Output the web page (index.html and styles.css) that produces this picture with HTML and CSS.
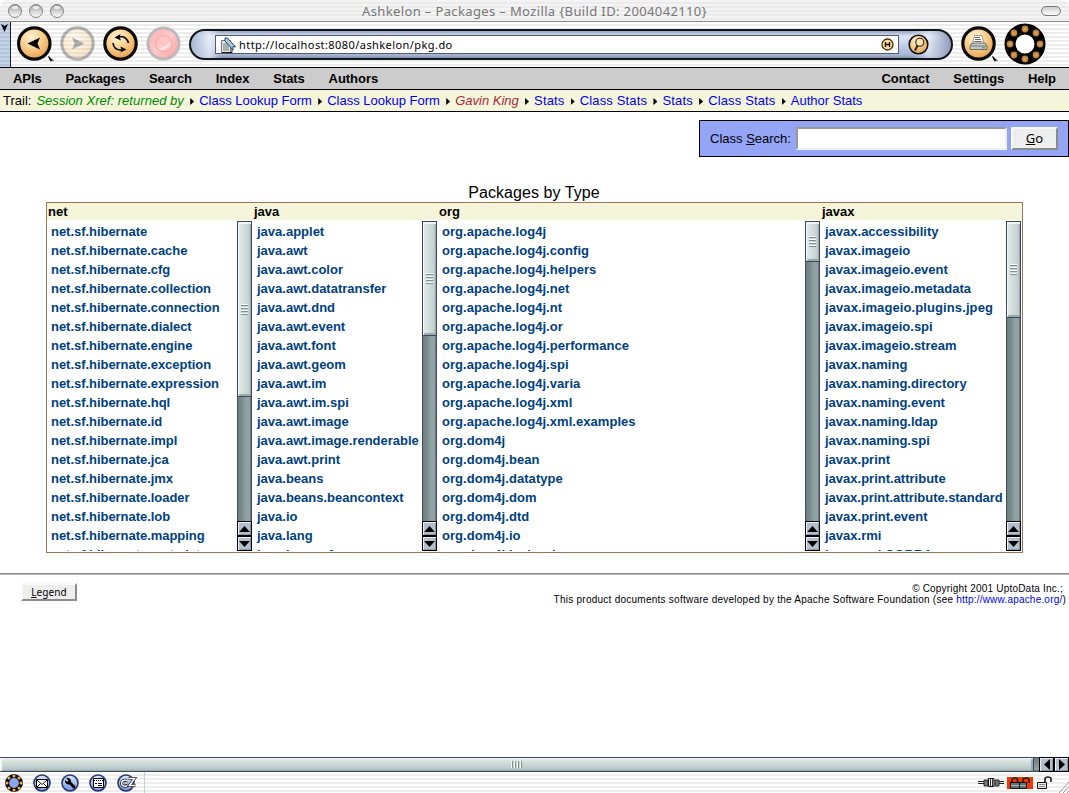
FILE: index.html
```html
<!DOCTYPE html>
<html lang="en">
<head>
<meta charset="utf-8">
<title>Ashkelon – Packages</title>
<link rel="stylesheet" href="styles.css">
</head>
<body>
<svg width="0" height="0" class="defs">
  <defs>
    <radialGradient id="gold" cx=".4" cy=".3" r=".75"><stop offset="0" stop-color="#fff3d6"/><stop offset=".5" stop-color="#f8cd88"/><stop offset="1" stop-color="#e59a4e"/></radialGradient>
    <radialGradient id="bead"><stop offset="0" stop-color="#e0a95f"/><stop offset="1" stop-color="#ad7532"/></radialGradient>
    <linearGradient id="blue" x1="0" y1="0" x2="0" y2="1"><stop offset="0" stop-color="#dfe8ff"/><stop offset="1" stop-color="#7694e6"/></linearGradient>
    <linearGradient id="red" x1="0" y1="0" x2="1" y2="1"><stop offset="0" stop-color="#ffb0b0"/><stop offset=".5" stop-color="#ffc9c9"/><stop offset="1" stop-color="#fb9c9c"/></linearGradient>
    <linearGradient id="light" x1="0" y1="0" x2="0" y2="1"><stop offset="0" stop-color="#8e8e8e"/><stop offset=".5" stop-color="#d2d2d2"/><stop offset="1" stop-color="#fff"/></linearGradient>
    <symbol id="s-up" viewBox="0 0 9 5"><path d="M0 5L4.500 0L9 5z"/></symbol>
    <symbol id="s-down" viewBox="0 0 9 5"><path d="M0 0L4.500 5L9 0z"/></symbol>
    <symbol id="s-ring" viewBox="0 0 42 42">
      <circle cx="21" cy="21" r="15" fill="none" stroke="#000" stroke-width="11"/>
      <g fill="url(#bead)"><circle cx="21" cy="6" r="3.400"/><circle cx="32" cy="10" r="3.400"/><circle cx="36" cy="21" r="3.400"/><circle cx="32" cy="32" r="3.400"/><circle cx="21" cy="36" r="3.400"/><circle cx="10" cy="32" r="3.400"/><circle cx="6" cy="21" r="3.400"/><circle cx="10" cy="10" r="3.400"/></g>
    </symbol>
  </defs>
</svg>

<header class="titlebar">
  <svg class="lights" width="58" height="16" viewBox="0 0 58 16">
    <g fill="url(#light)" stroke="#858585"><circle cx="8" cy="8" r="6.500"/><circle cx="29" cy="8" r="6.500"/><circle cx="50" cy="8" r="6.500"/></g>
    <g fill="#fff" opacity=".75"><ellipse cx="8" cy="4.500" rx="3.300" ry="1.700"/><ellipse cx="29" cy="4.500" rx="3.300" ry="1.700"/><ellipse cx="50" cy="4.500" rx="3.300" ry="1.700"/></g>
  </svg>
  <h1 class="window-title">Ashkelon – Packages – Mozilla {Build ID: 2004042110}</h1>
  <span class="pill"></span>
</header>

<div class="toolbar">
  <div class="grippy"><svg width="7" height="8" viewBox="0 0 7 8"><path d="M0 0L3.500 2L7 0L3.500 8z"/></svg></div>
  <svg class="tool back" width="40" height="42" viewBox="0 0 40 42">
    <circle cx="18.300" cy="19.500" r="15.700" fill="url(#gold)" stroke="#0b0b0b" stroke-width="3.200"/>
    <path d="M11.500 19.500L24 13.500L21.500 19.500L24 25.500z"/><path d="M32 31.500L38 37L35.500 36.500L35 38L32.800 34.500z"/>
  </svg>
  <svg class="tool forward" width="36" height="42" viewBox="0 0 36 42" opacity=".3">
    <circle cx="17.500" cy="19.500" r="15.700" fill="url(#gold)" stroke="#0b0b0b" stroke-width="3"/>
    <path d="M24.500 19.500L12 13.500L14.500 19.500L12 25.500z"/>
  </svg>
  <svg class="tool reload" width="36" height="42" viewBox="0 0 36 42">
    <circle cx="17.500" cy="19.500" r="15.700" fill="url(#gold)" stroke="#0b0b0b" stroke-width="3.200"/>
    <path d="M15 13Q23 11 25.500 19M20 26Q11 27 10 19" fill="none" stroke="#0b0b0b" stroke-width="1.700"/>
    <path d="M11.500 13.500L17.500 10L16.500 13L18 16.500zM23.500 25.500L17.500 22.500L18.500 26L17.500 28.500z"/>
  </svg>
  <svg class="tool stop" width="36" height="42" viewBox="0 0 36 42">
    <circle cx="17.500" cy="19.500" r="15.500" fill="url(#red)" stroke="#bcbaba" stroke-width="3"/>
    <circle cx="17.500" cy="19.500" r="8" fill="#ffc4c4" stroke="#fba0a0" opacity=".8"/><path d="M12 24A8 8 0 0 0 25 17Q19 24 12 24z" fill="#fff" opacity=".55"/>
  </svg>
  <div class="location">
    <div class="url-box">
      <svg width="17" height="16" viewBox="0 0 17 16"><path d="M1.500 3.500h9v12h-9z" fill="#e6e6e6" stroke="#777"/><path d="M3 7h5M3 9h6M3 11h6M3 13h6" stroke="#777"/><path d="M2 15.500h10V10" fill="none" stroke="#111"/><path d="M5 1L7.500 1L15.500 10L13 9.500L13 13L5 4z" fill="#a7cbe0" stroke="#29495e"/></svg>
      <span class="url">http://localhost:8080/ashkelon/pkg.do</span>
      <svg class="h-mark" width="13" height="13" viewBox="0 0 13 13"><circle cx="6.500" cy="6.500" r="5.500" fill="#ffd892" stroke="#3d2b0e" stroke-width="1.300"/><path d="M4.500 4v5M8.500 4v5M4.500 6.500h4" stroke="#111" stroke-width="1.400"/></svg>
    </div>
    <svg class="go" width="21" height="21" viewBox="0 0 21 21"><circle cx="10.500" cy="10.500" r="9.300" fill="url(#gold)" stroke="#111" stroke-width="1.600"/><circle cx="11.800" cy="8.200" r="4" fill="#ffe2ae" stroke="#222" stroke-width="1.100"/><path d="M9.500 11.500L7 16.500" stroke="#222" stroke-width="2"/></svg>
  </div>
  <svg class="tool print" width="39" height="42" viewBox="0 0 39 42">
    <circle cx="17.500" cy="19.500" r="15.700" fill="url(#gold)" stroke="#0b0b0b" stroke-width="3.200"/>
    <path d="M13.500 11.500h7.500l2 9H11.500z" fill="#fff" stroke="#777" stroke-width=".7"/><path d="M14 13.500h5M14 15.500h6M13.500 17.500h7" stroke="#555" stroke-width=".9"/>
    <path d="M11 19h13l2 3v3.500H9V22z" fill="#c4c7c8" stroke="#555" stroke-width=".8"/><path d="M9 22h17" stroke="#777"/><path d="M21 23.800h3" stroke="#37b33b" stroke-width="1.200"/>
    <path d="M31 31.500L37 37L34.500 36.500L34 38L31.800 34.500z"/>
  </svg>
  <svg class="throbber" width="42" height="42"><circle cx="21" cy="21" r="11" fill="#fff"/><use href="#s-ring"/></svg>
</div>

<nav class="menu">
  <div class="menu-group"><a>APIs</a><a>Packages</a><a>Search</a><a>Index</a><a>Stats</a><a>Authors</a></div>
  <div class="menu-group"><a>Contact</a><a>Settings</a><a>Help</a></div>
</nav>

<div class="trail">
  <span class="trail-label">Trail:</span><em class="xref">Session Xref: returned by</em><i class="sep"></i><a>Class Lookup Form</a><i class="sep"></i><a>Class Lookup Form</a><i class="sep"></i><em class="author">Gavin King</em><i class="sep"></i><a class="wide">Stats</a><i class="sep"></i><a class="wide">Class Stats</a><i class="sep"></i><a class="wide">Stats</a><i class="sep"></i><a class="wide">Class Stats</a><i class="sep"></i><a>Author Stats</a>
</div>

<main class="page">
  <form class="search"><label for="q">Class <u>S</u>earch:</label><input id="q" class="field" type="text"><button class="btn go-btn" type="button"><u>G</u>o</button></form>
  <h2 class="caption">Packages by Type</h2>
  <section class="packages">
    <div class="col net">
      <h3>net</h3>
      <div class="pane"><ul><li>net.sf.hibernate</li><li>net.sf.hibernate.cache</li><li>net.sf.hibernate.cfg</li><li>net.sf.hibernate.collection</li><li>net.sf.hibernate.connection</li><li>net.sf.hibernate.dialect</li><li>net.sf.hibernate.engine</li><li>net.sf.hibernate.exception</li><li>net.sf.hibernate.expression</li><li>net.sf.hibernate.hql</li><li>net.sf.hibernate.id</li><li>net.sf.hibernate.impl</li><li>net.sf.hibernate.jca</li><li>net.sf.hibernate.jmx</li><li>net.sf.hibernate.loader</li><li>net.sf.hibernate.lob</li><li>net.sf.hibernate.mapping</li><li>net.sf.hibernate.metadata</li></ul>
      <div class="vbar"><div class="thumb t-net"><i class="grip"></i></div><span class="arrow"><svg width="11" height="6"><use href="#s-up"/></svg></span><span class="arrow"><svg width="11" height="6"><use href="#s-down"/></svg></span></div></div>
    </div>
    <div class="col">
      <h3>java</h3>
      <div class="pane"><ul><li>java.applet</li><li>java.awt</li><li>java.awt.color</li><li>java.awt.datatransfer</li><li>java.awt.dnd</li><li>java.awt.event</li><li>java.awt.font</li><li>java.awt.geom</li><li>java.awt.im</li><li>java.awt.im.spi</li><li>java.awt.image</li><li>java.awt.image.renderable</li><li>java.awt.print</li><li>java.beans</li><li>java.beans.beancontext</li><li>java.io</li><li>java.lang</li><li>java.lang.ref</li></ul>
      <div class="vbar"><div class="thumb t-java"><i class="grip"></i></div><span class="arrow"><svg width="11" height="6"><use href="#s-up"/></svg></span><span class="arrow"><svg width="11" height="6"><use href="#s-down"/></svg></span></div></div>
    </div>
    <div class="col org">
      <h3>org</h3>
      <div class="pane"><ul><li>org.apache.log4j</li><li>org.apache.log4j.config</li><li>org.apache.log4j.helpers</li><li>org.apache.log4j.net</li><li>org.apache.log4j.nt</li><li>org.apache.log4j.or</li><li>org.apache.log4j.performance</li><li>org.apache.log4j.spi</li><li>org.apache.log4j.varia</li><li>org.apache.log4j.xml</li><li>org.apache.log4j.xml.examples</li><li>org.dom4j</li><li>org.dom4j.bean</li><li>org.dom4j.datatype</li><li>org.dom4j.dom</li><li>org.dom4j.dtd</li><li>org.dom4j.io</li><li>org.dom4j.jaxb.rule</li></ul>
      <div class="vbar"><div class="thumb t-org"><i class="grip"></i></div><span class="arrow"><svg width="11" height="6"><use href="#s-up"/></svg></span><span class="arrow"><svg width="11" height="6"><use href="#s-down"/></svg></span></div></div>
    </div>
    <div class="col">
      <h3>javax</h3>
      <div class="pane"><ul><li>javax.accessibility</li><li>javax.imageio</li><li>javax.imageio.event</li><li>javax.imageio.metadata</li><li class="loose">javax.imageio.plugins.jpeg</li><li>javax.imageio.spi</li><li>javax.imageio.stream</li><li>javax.naming</li><li>javax.naming.directory</li><li>javax.naming.event</li><li>javax.naming.ldap</li><li>javax.naming.spi</li><li>javax.print</li><li>javax.print.attribute</li><li class="tight">javax.print.attribute.standard</li><li>javax.print.event</li><li>javax.rmi</li><li>javax.rmi.CORBA</li></ul>
      <div class="vbar"><div class="thumb t-javax"><i class="grip"></i></div><span class="arrow"><svg width="11" height="6"><use href="#s-up"/></svg></span><span class="arrow"><svg width="11" height="6"><use href="#s-down"/></svg></span></div></div>
    </div>
  </section>
  <footer class="footer">
    <button class="btn legend" type="button"><u>L</u>egend</button>
    <div class="legal"><div class="copy">© Copyright 2001 UptoData Inc.;</div><div class="notice">This product documents software developed by the Apache Software Foundation (see <a>http://www.apache.org/</a>)</div></div>
  </footer>
</main>

<div class="hbar"><div class="hthumb"><i class="hgrip"></i></div><span class="arrow"><svg width="6" height="11" viewBox="0 0 5 9"><path d="M5 0L0 4.500L5 9z"/></svg></span><span class="arrow"><svg width="6" height="11" viewBox="0 0 5 9"><path d="M0 0L5 4.500L0 9z"/></svg></span></div>

<div class="status">
  <div class="apps">
    <svg width="18" height="18" viewBox="0 0 18 18"><circle cx="9" cy="9" r="6.900" fill="#8aa6ee" stroke="#080808" stroke-width="4"/><g fill="#f0b050"><circle cx="9" cy="2" r="1.500"/><circle cx="14" cy="4" r="1.500"/><circle cx="16" cy="9" r="1.500"/><circle cx="14" cy="14" r="1.500"/><circle cx="9" cy="16" r="1.500"/><circle cx="4" cy="14" r="1.500"/><circle cx="2" cy="9" r="1.500"/><circle cx="4" cy="4" r="1.500"/></g></svg>
    <svg width="18" height="18" viewBox="0 0 18 18"><circle cx="9" cy="9" r="8" fill="url(#blue)" stroke="#26386b" stroke-width="1.600"/><path d="M3.500 5.500h11v8h-11z" fill="#fff" stroke="#000"/><path d="M4 6L9 10.500L14 6M4 13L7.500 9.500M14 13L10.500 9.500" fill="none" stroke="#000" stroke-width=".9"/></svg>
    <svg width="18" height="18" viewBox="0 0 18 18"><circle cx="9" cy="9" r="8" fill="url(#blue)" stroke="#26386b" stroke-width="1.600"/><path d="M8 8L13 13" stroke="#000" stroke-width="3" stroke-linecap="round"/><path d="M5 4L7.500 6.500L6.500 8L4 6A3.500 3.500 0 0 0 9 10L10 7A3.500 3.500 0 0 0 5 4z"/></svg>
    <svg width="18" height="18" viewBox="0 0 18 18"><circle cx="9" cy="9" r="8" fill="url(#blue)" stroke="#26386b" stroke-width="1.600"/><path d="M4.500 4.500h10v9h-10z" fill="#fff" stroke="#000"/><path d="M5 6.500h9" stroke="#000" stroke-dasharray="1 1"/><path d="M6 9.500h2M9 9.500h4M9 11.500h4" stroke="#000"/></svg>
    <svg width="20" height="18" viewBox="0 0 20 18"><circle cx="9" cy="9" r="8" fill="url(#blue)" stroke="#26386b" stroke-width="1.600"/><path d="M10 6.500Q5 5 4.500 9.500Q5 13 10 12M10.500 9H7.500M11.500 4.500H17.500L12.500 11.500H18.500" fill="none" stroke="#222" stroke-width="3"/><path d="M10 6.500Q5 5 4.500 9.500Q5 13 10 12M10.500 9H7.500M11.500 4.500H17.500L12.500 11.500H18.500" fill="none" stroke="#fff" stroke-width="1.500"/></svg>
  </div>
  <div class="security">
    <svg class="plug" width="26" height="9" viewBox="0 0 26 9"><path d="M0 3.500h8M0 5.500h8M18 3.500h8M18 5.500h8" stroke="#222"/><path d="M6 2h4v6H6zM17 2h4v6h-4z" fill="#777" stroke="#222" stroke-width=".9"/><path d="M10.500.5h5.500v8h-5.500z" fill="#eee" stroke="#111"/><path d="M12.500 1v7M14.500 1v7" stroke="#333"/></svg>
    <span class="alert"><svg width="24" height="12" viewBox="0 0 24 12"><path d="M4 6V3Q4 1 7 1Q9.500 1 9.500 3V6M15 6V3Q15 1 18 1Q21 1 21 3V6" fill="none" stroke="#222" stroke-width="1.600"/><path d="M2.500 5.500h9v6h-9zM11.500 5.500h7v6h-7z" fill="#65717a" stroke="#111"/><path d="M3 8.500h8M12 8.500h6" stroke="#a6b0b8"/></svg></span>
    <svg class="unlock" width="17" height="13" viewBox="0 0 17 13"><path d="M8 6V3Q8 1 11 1Q14 1 14 3V6" fill="none" stroke="#222" stroke-width="1.600"/><path d="M.5 6.500h9v6h-9z" fill="#eee" stroke="#111"/><path d="M2 8.500h6M2 10.500h6" stroke="#888"/></svg>
    <svg class="resize" width="10" height="12" viewBox="0 0 10 12"><path d="M0 12L10 1M4 12L10 5.500M8 12L10 10" stroke="#999"/></svg>
  </div>
</div>
</body>
</html>
```
FILE: styles.css
```css
* { box-sizing: border-box; }
body { margin: 0; width: 1069px; height: 793px; overflow: hidden; display: flex; flex-direction: column; background: #fff; color: #000; font: 13px/19px "Liberation Sans", Arial, sans-serif; }
svg { display: block; flex: none; }
.defs { position: absolute; }
h1, h2, h3, ul { margin: 0; padding: 0; font-size: inherit; }
i { display: block; flex: none; }
a { color: #00e; }

.titlebar { flex: none; height: 22px; display: grid; grid-template-columns: 100px 1fr 100px; align-items: center; padding: 0 7px; border: solid #c8c8c8; border-width: 0 0 1px; border-bottom-color: #8a8a8a; border-radius: 7px 7px 0 0; background: repeating-linear-gradient(#f4f4f4 0 2px, #ebebeb 2px 4px); }
.window-title { text-align: center; font: 13px/20px "Noto Sans", sans-serif; letter-spacing: .37px; color: #777; white-space: nowrap; }
.pill { justify-self: end; width: 20px; height: 10px; margin: 1px 1px 0 0; border: 1px solid #777; border-radius: 5px; background: linear-gradient(#ccc, #fff); }

.toolbar { flex: none; height: 46px; display: flex; align-items: center; border-bottom: 1px solid #000; background: repeating-linear-gradient(#fff 0 2px, #ececec 2px 4px); }
.grippy { width: 11px; height: 45px; padding: 2px 0 0 1px; border-right: 1px solid #222; background: repeating-linear-gradient(#c5d3e8 0 2px, #b4c4dd 2px 4px); }
.back { margin-left: 5px; }
.forward { margin-left: 4px; }
.reload { margin-left: 7px; }
.stop { margin-left: 7px; }
.location { flex: none; display: flex; align-items: center; width: 764px; height: 31px; margin-left: 7px; padding: 0 23px 0 24px; border: 2px solid #10151c; border-radius: 16px; background: linear-gradient(90deg, #a9b7d2 0, rgba(238,242,250,.7) 18px, rgba(205,216,236,0) 30px, rgba(205,216,236,0) 720px, rgba(238,242,250,.6) 738px, #8e9cba 760px), linear-gradient(#93a2c2 0, #dce5f5 5px, #c3d1eb 14px, #a5b5d2 24px, #8492ad 100%); }
.url-box { flex: none; display: flex; align-items: center; width: 684px; height: 19px; padding: 0 4px; border: 1px solid #555d6c; background: #fff; }
.url { flex: 1; padding-left: 2px; font: 11px/17px "Noto Sans", sans-serif; letter-spacing: .43px; }
.go { margin-left: 9px; }
.print { margin-left: 8px; }
.throbber { margin: -1px 0 0 4px; }

.menu { flex: none; height: 22px; display: flex; justify-content: space-between; padding: 0 13px; border-bottom: 1px solid #000; background: #ccc; font-weight: bold; line-height: 21px; letter-spacing: -.05px; }
.menu-group { display: flex; gap: 23.8px; }
.menu a { color: #000; }
.trail { flex: none; height: 22px; display: flex; align-items: center; padding-left: 3px; border-bottom: 1px solid #000; background: #f5f5dc; line-height: 21px; white-space: nowrap; }
.trail-label { margin-right: 5px; }
.xref { color: #080; letter-spacing: .03px; }
.author { color: #a52a3a; }
.wide { letter-spacing: .15px; }
.sep { width: 4px; height: 7px; margin: 2px 5px 0 6.300px; background: #000; clip-path: polygon(0 0, 100% 50%, 0 100%); }

.page { height: 645px; flex: none; display: flex; flex-direction: column; padding-top: 8px; }
.search { align-self: flex-end; display: flex; align-items: center; width: 370px; height: 37px; padding-left: 10px; border: 1px solid #000; background: #94a5f6; }
.search label { width: 86px; white-space: nowrap; }
.field { width: 211px; height: 23px; margin: 0 4px 0 0; padding: 0 3px; border: 2px solid; border-color: #999 #f0f0f0 #f0f0f0 #999; background: #fff; }
.btn { margin: 0; padding: 0; border: 2px solid; border-color: #fafafa #8b8b8b #8b8b8b #fafafa; background: #eee; color: #000; font-family: "Noto Sans", sans-serif; }
.go-btn { width: 47px; height: 23px; font-size: 13px; line-height: 17px; }
.caption { margin: 26px 0 0; height: 19px; padding-right: 1px; text-align: center; font-size: 16px; font-weight: normal; line-height: 19px; letter-spacing: .06px; }
.packages { flex: none; display: grid; grid-template-columns: 205px 185px 383px 202px; width: 977px; height: 351px; margin-left: 46px; border: 1px solid #997755; }
.col { display: flex; flex-direction: column; padding-left: 2px; background: linear-gradient(#f5f5dc 17px, #fff 17px); }
.col:first-child { padding-left: 1px; }
.col:last-child { padding-right: 1px; }
.col h3 { height: 18px; line-height: 18px; font-weight: bold; }
.net ul { letter-spacing: -.04px; }
.org ul { letter-spacing: .05px; }
.loose { letter-spacing: .1px; }
.tight { letter-spacing: -.05px; }
.pane { display: flex; justify-content: space-between; height: 330px; }
.pane ul { list-style: none; height: 330px; padding: 1px 0 0 3px; overflow: hidden; color: #004080; font-weight: bold; white-space: nowrap; }
.vbar { flex: none; width: 15px; height: 330px; display: flex; flex-direction: column; background: linear-gradient(90deg, #434e5c 1px, #6c7d7e 1px, #7f9192 6px, #91a3a2 9px, #92a3a2 13px, #434d68 14px); }
.thumb { display: flex; align-items: center; justify-content: center; border: 1px solid #3f4860; box-shadow: inset 1px 2px 1px #f4f8f7, inset -1px -2px 1px #98a9a8; background: linear-gradient(90deg, #e3ebea, #c9d6d4 70%, #b6c6c4); margin-bottom: auto; }
.t-net { height: 176px; }
.t-java { height: 115px; }
.t-org { height: 41px; }
.t-javax { height: 97px; }
.grip { width: 7px; height: 11px; margin-right: 1px; background: repeating-linear-gradient(#f4fafa 0 1px, #82908f 1px 2px, #c9d5d4 2px 3px); }
.arrow { display: flex; align-items: center; justify-content: center; flex: none; width: 15px; height: 15px; border: 1px solid #000; background: #b4bfcc; box-shadow: inset 1px 1px #eaf0f6, inset -1px -1px #8995a4; }

.footer { height: 40px; margin-top: 20px; display: flex; justify-content: space-between; align-items: flex-start; border-top: 1px solid #888; box-shadow: inset 0 1px #bbb; padding: 9px 3px 0 21px; }
.legend { width: 56px; height: 18px; font-size: 10px; line-height: 13px; letter-spacing: .1px; }
.legal { font-size: 10px; line-height: 11px; letter-spacing: .2px; text-align: right; }
.notice { letter-spacing: .25px; }
.notice a { letter-spacing: .2px; }
.copy { padding-right: 3px; }

.hbar { flex: none; display: flex; height: 15px; background: linear-gradient(#434e5c 1px, #6c7d7e 1px, #92a3a2 13px, #434d68 14px); }
.hthumb { width: 1034px; margin-right: 5px; display: flex; align-items: center; justify-content: center; border: 1px solid #3f4860; border-left-width: 0; box-shadow: inset 2px 1px 1px #f4f8f7, inset -2px -1px 1px #98a9a8; background: linear-gradient(#e3ebea, #c5d3d1 60%, #aebfbd); }
.hgrip { width: 11px; height: 7px; background: repeating-linear-gradient(90deg, #f4fafa 0 1px, #82908f 1px 2px, #c9d5d4 2px 3px); }
.status { flex: none; height: 21px; display: flex; justify-content: space-between; background: repeating-linear-gradient(#fff 0 2px, #ededed 2px 4px); }
.apps { display: flex; align-items: center; gap: 10px; width: 145px; padding-left: 5px; border-right: 1px solid #c5d0df; }
.security { display: flex; align-items: center; }
.alert { display: block; margin: 0 4px 0 3px; padding: 0 1px; background: #f23800; }
.resize { margin: 8px 0 0 5px; }
```
